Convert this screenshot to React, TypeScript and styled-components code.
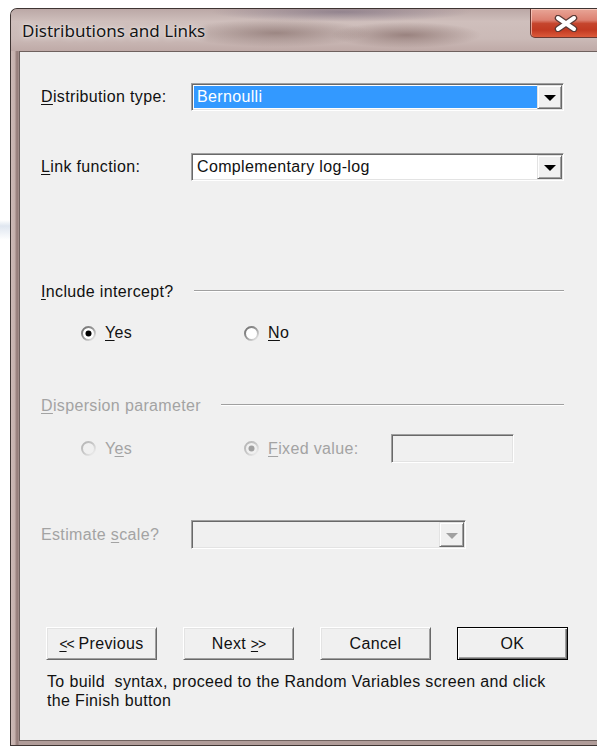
import React, { useId } from "react";
import styled, { createGlobalStyle } from "styled-components";

const GlobalStyle = createGlobalStyle`
  html, body {
    margin: 0;
    padding: 0;
    background: #ffffff;
    overflow: hidden;
  }
  body {
    font-family: "Liberation Sans", Arial, sans-serif;
    font-size: 16px;
    letter-spacing: 0.35px;
    color: #000;
  }
`;

const Desktop = styled.div`
  height: 746px;
  box-sizing: border-box;
  padding: 8px 0 0 10px;
  background: linear-gradient(180deg, #ffffff 0, #ffffff 220px, #dfe6f0 226px, #ffffff 240px);
`;

const WindowFrame = styled.div`
  width: 620px;
  height: 738px;
  box-sizing: border-box;
  border: 1px solid #3e3432;
  border-right: none;
  border-top-left-radius: 7px;
  display: flex;
  flex-direction: column;
  overflow: hidden;
  background: linear-gradient(90deg, #cdbab6 0, #c4afab 4px, #9f8783 5px, #937c79 7px, #b09c99 8px);
`;

const TitleBar = styled.div`
  height: 42px;
  flex: none;
  display: flex;
  align-items: flex-start;
  letter-spacing: 0;
  background:
    radial-gradient(ellipse 95px 14px at 265px 24px, rgba(108, 82, 78, 0.5), rgba(108, 82, 78, 0) 100%),
    radial-gradient(ellipse 75px 13px at 395px 26px, rgba(112, 84, 80, 0.55), rgba(112, 84, 80, 0) 100%),
    radial-gradient(ellipse 130px 10px at 330px 3px, rgba(80, 70, 100, 0.4), rgba(80, 70, 100, 0) 100%),
    linear-gradient(180deg, #bba8a6 0, #cfbfbc 30%, #cbbab7 70%, #bfaaa7 100%);
`;

const TitleText = styled.div`
  padding: 11px 0 0 11px;
  font-family: "Noto Sans", "Open Sans", sans-serif;
  font-size: 17px;
  line-height: 22px;
  color: #141414;
  text-shadow: 0 0 6px rgba(255, 255, 255, 0.85), 0 0 2px rgba(255, 255, 255, 0.7);
`;

const CloseButton = styled.div`
  margin-left: auto;
  margin-right: 28px;
  width: 72px;
  height: 29px;
  box-sizing: border-box;
  border: 1px solid #6a3a33;
  border-top: none;
  border-bottom-left-radius: 5px;
  display: flex;
  align-items: center;
  padding-left: 23px;
  background: linear-gradient(
    180deg,
    #e8a597 0,
    #dc8070 40%,
    #c5452d 52%,
    #c23a22 75%,
    #dc5a3a 100%
  );
  box-shadow: inset 1px 1px 0 rgba(255, 220, 210, 0.6);
`;

const ClientWrap = styled.div`
  flex: 1;
  display: flex;
  padding: 0 0 4px 8px;
`;

const Client = styled.div`
  flex: 1;
  box-sizing: border-box;
  border: 1px solid #6f615e;
  border-right: none;
  background: #f0f0f0;
  display: flex;
  flex-direction: column;
  padding-left: 21px;
`;

const FieldRow = styled.div<{ $top: number; $h: number }>`
  margin-top: ${(p) => p.$top}px;
  height: ${(p) => p.$h}px;
  display: flex;
  align-items: center;
`;

const Label = styled.div<{ $disabled?: boolean }>`
  width: 150px;
  flex: none;
  white-space: nowrap;
  color: ${(p) => (p.$disabled ? "#a3a3a3" : "#111")};
`;

const U = styled.span`
  text-decoration: underline;
  text-underline-offset: 2px;
`;

const Combo = styled.div<{ $w: number; $disabled?: boolean }>`
  width: ${(p) => p.$w}px;
  height: 100%;
  box-sizing: border-box;
  display: flex;
  padding: 1px;
  border: 1px solid;
  border-color: #a0a0a0 #ffffff #ffffff #a0a0a0;
  box-shadow: inset 1px 1px 0 #696969, inset -1px -1px 0 #e3e3e3;
  background: ${(p) => (p.$disabled ? "#f0f0f0" : "#ffffff")};
`;

const ComboValue = styled.div<{ $selected?: boolean }>`
  flex: 1;
  display: flex;
  align-items: center;
  padding-left: 3px;
  margin: 1px 0 1px 1px;
  white-space: nowrap;
  background: ${(p) => (p.$selected ? "#3399ff" : "transparent")};
  color: ${(p) => (p.$selected ? "#ffffff" : "#111")};
`;

const ArrowButton = styled.div`
  width: 25px;
  flex: none;
  box-sizing: border-box;
  display: flex;
  align-items: center;
  justify-content: center;
  background: #f0f0f0;
  border: 1px solid;
  border-color: #e3e3e3 #696969 #696969 #e3e3e3;
  box-shadow: inset 1px 1px 0 #ffffff, inset -1px -1px 0 #a0a0a0;
`;

const Caret = styled.div<{ $disabled?: boolean }>`
  width: 0;
  height: 0;
  margin-top: 2px;
  border-left: 6px solid transparent;
  border-right: 6px solid transparent;
  border-top: 6px solid ${(p) => (p.$disabled ? "#a0a0a0" : "#000")};
`;

const Heading = styled.div<{ $top: number; $disabled?: boolean }>`
  margin-top: ${(p) => p.$top}px;
  height: 20px;
  width: 523px;
  display: flex;
  align-items: center;
  gap: 20px;
  color: ${(p) => (p.$disabled ? "#a3a3a3" : "#111")};
  white-space: nowrap;
`;

const EtchedLine = styled.div`
  flex: 1;
  height: 0;
  margin-top: -2px;
  border-top: 1px solid #a0a0a0;
  border-bottom: 1px solid #ffffff;
`;

const OptionRow = styled.div<{ $top: number; $h: number }>`
  margin-top: ${(p) => p.$top}px;
  height: ${(p) => p.$h}px;
  display: flex;
  align-items: center;
  padding-left: 40px;
`;

const Option = styled.label<{ $w: number; $disabled?: boolean }>`
  width: ${(p) => p.$w}px;
  flex: none;
  display: flex;
  align-items: center;
  gap: 9px;
  white-space: nowrap;
  color: ${(p) => (p.$disabled ? "#a3a3a3" : "#111")};
`;

const TextBox = styled.div`
  width: 123px;
  height: 29px;
  box-sizing: border-box;
  border: 1px solid;
  border-color: #a0a0a0 #ffffff #ffffff #a0a0a0;
  box-shadow: inset 1px 1px 0 #696969, inset -1px -1px 0 #e3e3e3;
  background: #f0f0f0;
`;

const ButtonRow = styled.div`
  margin-top: 78px;
  padding-left: 5px;
  display: flex;
  gap: 26px;
`;

const PushButton = styled.div<{ $default?: boolean }>`
  width: 111px;
  height: 33px;
  box-sizing: border-box;
  display: flex;
  align-items: center;
  justify-content: center;
  background: #f0f0f0;
  color: #111;
  white-space: nowrap;
  border: 1px solid;
  border-color: ${(p) => (p.$default ? "#000 #000 #000 #000" : "#ffffff #696969 #696969 #ffffff")};
  box-shadow: ${(p) =>
    p.$default
      ? "inset 1px 1px 0 #ffffff, inset -1px -1px 0 #696969, inset -2px -2px 0 #a0a0a0"
      : "inset 1px 1px 0 #e3e3e3, inset -1px -1px 0 #a0a0a0"};
`;

const Chevrons = styled.span`
  font-size: 14px;
  letter-spacing: -1px;
`;

const Footnote = styled.div`
  margin-top: 12px;
  padding-left: 6px;
  line-height: 19px;
  white-space: pre;
  color: #111;
`;

function RadioMark({ checked, disabled }: { checked?: boolean; disabled?: boolean }) {
  const id = useId().replace(/:/g, "");
  const dark = disabled ? "#b4b4b4" : "#6e6e6e";
  const light = disabled ? "#f4f4f4" : "#f2f2f2";
  return (
    <svg width="15" height="15" viewBox="0 0 15 15" style={{ flex: "none" }}>
      <defs>
        <linearGradient id={`ring${id}`} x1="0" y1="0" x2="1" y2="1">
          <stop offset="0" stopColor={dark} />
          <stop offset="0.5" stopColor={disabled ? "#c8c8c8" : "#9a9a9a"} />
          <stop offset="1" stopColor={light} />
        </linearGradient>
      </defs>
      <circle cx="7.5" cy="7.5" r="6.5" fill={disabled ? "#f0f0f0" : "#ffffff"} stroke={`url(#ring${id})`} strokeWidth="2" />
      {checked && <circle cx="7.5" cy="7.5" r="3" fill={disabled ? "#a0a0a0" : "#000"} />}
    </svg>
  );
}

function CloseGlyph() {
  return (
    <svg width="24" height="17" viewBox="0 0 24 17">
      <path d="M4 3 L20 14 M20 3 L4 14" stroke="#5a3a36" strokeWidth="6.5" strokeLinecap="round" />
      <path d="M4 3 L20 14 M20 3 L4 14" stroke="#ffffff" strokeWidth="4" strokeLinecap="round" />
    </svg>
  );
}

export default function App() {
  return (
    <>
      <GlobalStyle />
      <Desktop>
        <WindowFrame>
          <TitleBar>
            <TitleText>Distributions and Links</TitleText>
            <CloseButton>
              <CloseGlyph />
            </CloseButton>
          </TitleBar>
          <ClientWrap>
            <Client>
              <FieldRow $top={31} $h={28}>
                <Label>
                  <U>D</U>istribution type:
                </Label>
                <Combo $w={373}>
                  <ComboValue $selected>Bernoulli</ComboValue>
                  <ArrowButton>
                    <Caret />
                  </ArrowButton>
                </Combo>
              </FieldRow>

              <FieldRow $top={42} $h={28}>
                <Label>
                  <U>L</U>ink function:
                </Label>
                <Combo $w={373}>
                  <ComboValue>Complementary log-log</ComboValue>
                  <ArrowButton>
                    <Caret />
                  </ArrowButton>
                </Combo>
              </FieldRow>

              <Heading $top={101}>
                <span>
                  <U>I</U>nclude intercept?
                </span>
                <EtchedLine />
              </Heading>

              <OptionRow $top={21} $h={20}>
                <Option $w={163}>
                  <RadioMark checked />
                  <span>
                    <U>Y</U>es
                  </span>
                </Option>
                <Option $w={147}>
                  <RadioMark />
                  <span>
                    <U>N</U>o
                  </span>
                </Option>
              </OptionRow>

              <Heading $top={53} $disabled>
                <span>
                  <U>D</U>ispersion parameter
                </span>
                <EtchedLine />
              </Heading>

              <OptionRow $top={18} $h={29}>
                <Option $w={163} $disabled>
                  <RadioMark disabled />
                  <span>
                    Y<U>e</U>s
                  </span>
                </Option>
                <Option $w={147} $disabled>
                  <RadioMark checked disabled />
                  <span>
                    <U>F</U>ixed value:
                  </span>
                </Option>
                <TextBox />
              </OptionRow>

              <FieldRow $top={57} $h={29}>
                <Label $disabled>
                  Estimate <U>s</U>cale?
                </Label>
                <Combo $w={275} $disabled>
                  <ComboValue />
                  <ArrowButton>
                    <Caret $disabled />
                  </ArrowButton>
                </Combo>
              </FieldRow>

              <ButtonRow>
                <PushButton>
                  <Chevrons>
                    <U>&lt;</U>&lt;
                  </Chevrons>
                  &nbsp;Previous
                </PushButton>
                <PushButton>
                  Next&nbsp;
                  <Chevrons>
                    <U>&gt;</U>&gt;
                  </Chevrons>
                </PushButton>
                <PushButton>Cancel</PushButton>
                <PushButton $default>OK</PushButton>
              </ButtonRow>

              <Footnote>
                {"To build  syntax, proceed to the Random Variables screen and click"}
                <br />
                {"the Finish button"}
              </Footnote>
            </Client>
          </ClientWrap>
        </WindowFrame>
      </Desktop>
    </>
  );
}
